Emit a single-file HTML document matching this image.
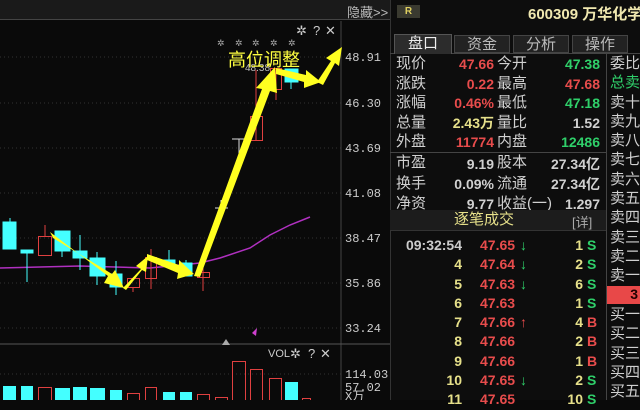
<!DOCTYPE html>
<html><head><meta charset="utf-8"><style>
*{margin:0;padding:0;box-sizing:border-box}
body{width:640px;height:400px;background:#0a0a0a;overflow:hidden;position:relative;font-family:"Liberation Sans","Noto Sans CJK SC",sans-serif;color:#ccc}
.a{position:absolute;white-space:nowrap}
.t{font-size:15px;line-height:18px}
.r{text-align:right}
.red{color:#e84c4c}.grn{color:#2fd06a}.yel{color:#e6e08a}.wht{color:#d0d0d0}
.n{font-weight:bold;font-size:14px}
</style></head><body>
<div class="a" style="left:0;top:0;width:390px;height:20px;background:#1a1a1a;border-bottom:1px solid #444"></div>
<div class="a" style="left:347px;top:2px;font-size:13px;color:#bbb">隐藏&gt;&gt;</div>
<svg class="a" style="left:0;top:0" width="390" height="400">
<g stroke="#333" stroke-dasharray="1,3">
<line x1="0" y1="57" x2="341" y2="57"/><line x1="0" y1="103" x2="341" y2="103"/><line x1="0" y1="148" x2="341" y2="148"/><line x1="0" y1="193" x2="341" y2="193"/><line x1="0" y1="238" x2="341" y2="238"/><line x1="0" y1="283" x2="341" y2="283"/><line x1="0" y1="328" x2="341" y2="328"/><line x1="0" y1="374" x2="341" y2="374"/>
</g>
<line x1="341" y1="21" x2="341" y2="400" stroke="#444"/>
<line x1="0" y1="344" x2="390" y2="344" stroke="#555"/>
<g fill="#ccc" font-size="12" font-family="Liberation Mono,monospace">
<text x="345" y="61">48.91</text><text x="345" y="107">46.30</text><text x="345" y="152">43.69</text><text x="345" y="197">41.08</text><text x="345" y="242">38.47</text><text x="345" y="287">35.86</text><text x="345" y="332">33.24</text><text x="345" y="378">114.03</text><text x="345" y="391">57.02</text><text x="345" y="400">X万</text>
</g>
<g fill="#ccc" font-size="13"><text x="296" y="35">✲</text><text x="313" y="35">?</text><text x="325" y="35">✕</text>
<text x="268" y="357" font-size="11">VOL</text><text x="290" y="358">✲</text><text x="308" y="358">?</text><text x="320" y="358">✕</text></g>
<g fill="#aaa" font-size="9"><text x="217" y="46">✲</text><text x="235" y="46">✲</text><text x="252" y="46">✲</text><text x="270" y="46">✲</text><text x="288" y="46">✲</text></g>
<polyline points="0,268 80,266 150,268 200,263 220,258 250,248 270,235 290,225 310,217" fill="none" stroke="#b030c0" stroke-width="1.5"/>
<g stroke="#4ff" fill="#4ff">
<line x1="10" y1="218" x2="10" y2="249"/><rect x="3" y="222" width="13" height="27"/>
<line x1="27" y1="250" x2="27" y2="282"/><rect x="21" y="250" width="12" height="3"/>
<line x1="62" y1="231" x2="62" y2="257"/><rect x="55" y="231" width="15" height="20"/>
<line x1="80" y1="235" x2="80" y2="270"/><rect x="73" y="251" width="14" height="7"/>
<line x1="97" y1="252" x2="97" y2="285"/><rect x="90" y="258" width="15" height="18"/>
<line x1="116" y1="261" x2="116" y2="295"/><rect x="110" y="274" width="12" height="13"/>
<line x1="169" y1="250" x2="169" y2="265"/><rect x="163" y="260" width="12" height="5"/>
<line x1="186" y1="260" x2="186" y2="276"/><rect x="180" y="263" width="12" height="13"/>
<line x1="291" y1="69" x2="291" y2="89"/><rect x="285" y="69" width="13" height="13"/>
</g>
<g stroke="#e04040" fill="none">
<line x1="45" y1="225" x2="45" y2="236"/><rect x="38.5" y="236.5" width="13" height="19"/>
<line x1="133" y1="287" x2="133" y2="292"/><rect x="127.5" y="278.5" width="12" height="9"/>
<line x1="151" y1="249" x2="151" y2="289"/><rect x="145.5" y="257.5" width="11" height="21"/>
<line x1="203" y1="265" x2="203" y2="291"/><rect x="197.5" y="272.5" width="12" height="5"/>
<line x1="256" y1="70" x2="256" y2="141"/><rect x="250.5" y="116.5" width="12" height="24"/>
<line x1="276" y1="68" x2="276" y2="100"/><rect x="270.5" y="68.5" width="11" height="21"/>
</g>
<g stroke="#ddd"><line x1="215" y1="208" x2="228" y2="208"/><line x1="221" y1="200" x2="221" y2="215"/>
<line x1="232" y1="139" x2="245" y2="139"/><line x1="239" y1="139" x2="239" y2="165"/></g>
<text x="245" y="71" fill="#bbb" font-size="10">48.38</text>
<g fill="#ffff20">
<polygon points="50,232 108,276 104,283 124,288 115,270 112,274 53,238"/>
<polygon points="123,288 141,269 136,266 148,256 146,272 142,270 126,290"/>
<polygon points="147,254 179,265 179,260 194,274 177,279 178,273 147,260"/>
<polygon points="194,276 262,89 256,88 275,67 277,93 270,91 200,277"/>
<polygon points="276,68 306,75 306,70 321,82 304,88 304,82 276,74"/>
<polygon points="317,82 331,61 326,58 342,47 339,66 335,63 323,85"/>
</g>
<text x="228" y="66" fill="#ffff40" font-size="18" font-family="Noto Sans CJK SC,sans-serif">高位调整</text>
<polygon points="252,333 257,328 256,336" fill="#d040d0"/>
<polygon points="222,345 226,339 230,345" fill="#aaa"/>
<g fill="#4ff"><rect x="3" y="386" width="13" height="14"/><rect x="21" y="386" width="12" height="14"/><rect x="55" y="388" width="15" height="12"/><rect x="73" y="387" width="14" height="13"/><rect x="90" y="388" width="15" height="12"/><rect x="110" y="390" width="12" height="10"/><rect x="163" y="392" width="12" height="8"/><rect x="180" y="392" width="12" height="8"/><rect x="285" y="382" width="13" height="18"/></g>
<g fill="none" stroke="#e04040"><rect x="38.5" y="387.5" width="13" height="13"/><rect x="127.5" y="393.5" width="12" height="7"/><rect x="145.5" y="387.5" width="11" height="13"/><rect x="197.5" y="394.5" width="12" height="6"/><rect x="215.5" y="397.5" width="12" height="3"/><rect x="232.5" y="361.5" width="13" height="39"/><rect x="250.5" y="369.5" width="12" height="31"/><rect x="269.5" y="378.5" width="12" height="22"/><rect x="302.5" y="398.5" width="8" height="2"/></g>
</svg>
<div class="a" style="left:390px;top:0;width:250px;height:400px;background:#0d0d0d;border-left:1px solid #333"></div>
<div class="a" style="left:397px;top:5px;width:23px;height:13px;background:#3a3a30;color:#e0d060;font-size:10px;font-weight:bold;text-align:center;line-height:13px">R</div>
<div class="a" style="left:528px;top:3px;font-size:15px;font-weight:bold;color:#f0e8b0">600309 万华化学</div>
<div class="a" style="left:390px;top:53px;width:250px;height:1px;background:#444"></div>
<div class="a t" style="left:394px;top:34px;width:58px;height:20px;background:#2c2c2c;border:1px solid #555;border-bottom:none;text-align:center;color:#eee">盘口</div>
<div class="a t" style="left:454px;top:35px;width:56px;height:18px;background:#222;border:1px solid #444;text-align:center;color:#bbb">资金</div>
<div class="a t" style="left:513px;top:35px;width:56px;height:18px;background:#222;border:1px solid #444;text-align:center;color:#bbb">分析</div>
<div class="a t" style="left:572px;top:35px;width:56px;height:18px;background:#222;border:1px solid #444;text-align:center;color:#bbb">操作</div>
<div class="a" style="left:606px;top:54px;width:1px;height:346px;background:#444"></div>
<div class="a" style="left:390px;top:152px;width:216px;height:1px;background:#444"></div>
<div class="a t wht" style="left:396px;top:54px;line-height:19.6px">现价<br>涨跌<br>涨幅<br>总量<br>外盘<br><span style="line-height:22px">市盈</span><br>换手<br>净资</div>
<div class="a t wht" style="left:497px;top:54px;line-height:19.6px">今开<br>最高<br>最低<br>量比<br>内盘<br><span style="line-height:22px">股本</span><br>流通<br>收益(一)</div>
<div class="a n r" style="right:146px;top:55px;line-height:19.6px"><span class="red">47.66</span><br><span class="red">0.22</span><br><span class="red">0.46%</span><br><span class="yel">2.43万</span><br><span class="red">11774</span><br><span class="wht" style="line-height:22px">9.19</span><br><span class="wht">0.09%</span><br><span class="wht">9.77</span></div>
<div class="a n r" style="right:40px;top:55px;line-height:19.6px"><span class="grn">47.38</span><br><span class="red">47.68</span><br><span class="grn">47.18</span><br><span class="wht">1.52</span><br><span class="grn">12486</span><br><span class="wht" style="line-height:22px">27.34亿</span><br><span class="wht">27.34亿</span><br><span class="wht">1.297</span></div>
<div class="a t wht" style="left:610px;top:54px;line-height:19.3px">委比<br><span class="grn">总卖</span><br>卖十<br>卖九<br>卖八<br>卖七<br>卖六<br>卖五<br>卖四<br>卖三<br>卖二<br>卖一</div>
<div class="a" style="left:607px;top:286px;width:33px;height:18px;background:#e84848;color:#200;font-size:14px;font-weight:bold;text-align:right;padding-right:2px">3</div>
<div class="a t wht" style="left:610px;top:305px;line-height:19.3px">买一<br>买二<br>买三<br>买四<br>买五</div>
<div class="a" style="left:390px;top:210px;width:216px;height:21px;background:#1c1c1c;border-bottom:1px solid #333"></div>
<div class="a t yel" style="left:454px;top:211px">逐笔成交</div>
<div class="a" style="left:572px;top:212px;font-size:13px;color:#aaa">[详]</div>
<div class="a n r wht" style="right:178px;top:236px;line-height:19.3px"><span style="color:#ccc">09:32:54</span><br><span class="yel">4</span><br><span class="yel">5</span><br><span class="yel">6</span><br><span class="yel">7</span><br><span class="yel">8</span><br><span class="yel">9</span><br><span class="yel">10</span><br><span class="yel">11</span></div>
<div class="a n red" style="left:480px;top:236px;line-height:19.3px">47.65<br>47.64<br>47.63<br>47.63<br>47.66<br>47.66<br>47.66<br>47.65<br>47.65</div>
<div class="a n" style="left:520px;top:236px;line-height:19.3px"><span class="grn">↓</span><br><span class="grn">↓</span><br><span class="grn">↓</span><br>&nbsp;<br><span class="red">↑</span><br>&nbsp;<br>&nbsp;<br><span class="grn">↓</span></div>
<div class="a n r yel" style="right:57px;top:236px;line-height:19.3px">1<br>2<br>6<br>1<br>4<br>2<br>1<br>2<br>10</div>
<div class="a n" style="left:587px;top:236px;line-height:19.3px"><span class="grn">S</span><br><span class="grn">S</span><br><span class="grn">S</span><br><span class="grn">S</span><br><span class="red">B</span><br><span class="red">B</span><br><span class="red">B</span><br><span class="grn">S</span><br><span class="grn">S</span></div>
</body></html>
